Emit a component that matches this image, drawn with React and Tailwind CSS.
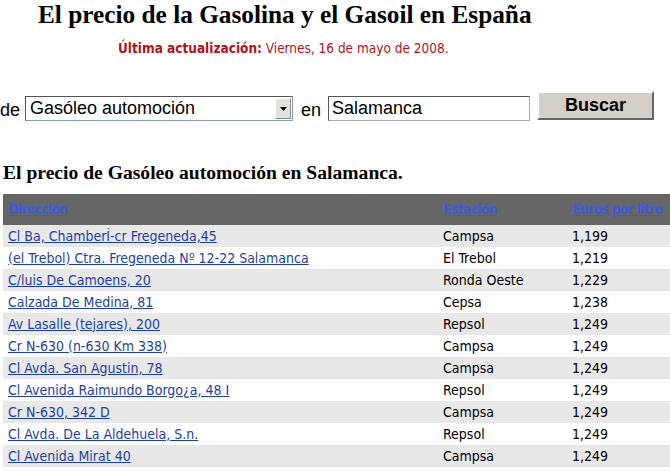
import React from 'react'

const rows = [
  ['Cl Ba, ChamberÍ-cr Fregeneda,45', 'Campsa', '1,199'],
  ['(el Trebol) Ctra. Fregeneda Nº 12-22 Salamanca', 'El Trebol', '1,219'],
  ['C/luis De Camoens, 20', 'Ronda Oeste', '1,229'],
  ['Calzada De Medina, 81', 'Cepsa', '1,238'],
  ['Av Lasalle (tejares), 200', 'Repsol', '1,249'],
  ['Cr N-630 (n-630 Km 338)', 'Campsa', '1,249'],
  ['Cl Avda. San Agustin, 78', 'Campsa', '1,249'],
  ['Cl Avenida Raimundo Borgo¿a, 48 I', 'Repsol', '1,249'],
  ['Cr N-630, 342 D', 'Campsa', '1,249'],
  ['Cl Avda. De La Aldehuela, S.n.', 'Repsol', '1,249'],
  ['Cl Avenida Mirat 40', 'Campsa', '1,249'],
]

const serif = { fontFamily: '"Liberation Serif", serif' }

const App = () => {
  return (
    <div className="w-[670px] h-[474px] overflow-hidden bg-white text-black">
      <h1
        className="pl-[38px] text-[25.3px] leading-[28px] font-bold whitespace-nowrap"
        style={serif}
      >
        El precio de la Gasolina y el Gasoil en España
      </h1>
      <p
        className="pl-[118px] mt-[12px] text-[13.5px] leading-[16px] text-[#b3101c] font-['DejaVu_Sans_Condensed',sans-serif]"
      >
        <b>Última actualización:</b> Viernes, 16 de mayo de 2008.
      </p>

      <div className="flex items-start mt-[35px] h-[30px] font-['Liberation_Sans',sans-serif] text-[18px] leading-[21px] whitespace-nowrap">
        <span className="mt-[9px]">de</span>
        <div className="ml-[5px] mt-[5px] w-[268px] h-[25px] border border-[#7f9db9] border-t-[#555] border-l-[#555] flex items-center bg-white">
          <span className="flex-1 pl-[4px]">Gasóleo automoción</span>
          <span className="w-[16px] h-[21px] mr-[1px] bg-[#e4e2dc] border border-[#888] border-t-white border-l-white flex items-center justify-center">
            <svg width="7" height="4" viewBox="0 0 7 4"><path d="M0 0h7L3.5 4z" fill="#000" /></svg>
          </span>
        </div>
        <span className="ml-[8px] mt-[9px]">en</span>
        <div className="ml-[7px] mt-[5px] w-[202px] h-[25px] border border-[#aaa] border-t-[#555] border-l-[#555] bg-white pl-[3px] leading-[23px]">
          Salamanca
        </div>
        <button className="ml-[7px] w-[117px] h-[29px] bg-[#d4d0c8] border-2 border-white border-r-[#666] border-b-[#666] font-bold">
          Buscar
        </button>
      </div>

      <h2 className="pl-[3px] mt-[41px] text-[19.6px] leading-[22px] font-bold whitespace-nowrap" style={serif}>
        El precio de Gasóleo automoción en Salamanca.
      </h2>

      <div className="ml-[3px] mt-[10px] w-[700px] font-['DejaVu_Sans_Condensed',sans-serif] text-[14px] whitespace-nowrap">
        <div className="flex items-center h-[31px] bg-[#666666] font-bold text-[14px] tracking-[-0.8px] text-[#3b5cd6] underline">
          <span className="w-[435px] pl-[5px]">Dirección</span>
          <span className="w-[129px] pl-[5px]">Estación</span>
          <span className="pl-[5px]">Euros por litro</span>
        </div>
        {rows.map((r, i) => (
          <div key={i} className={`flex items-center h-[22px] ${i % 2 === 0 ? 'bg-[#e8e8e8]' : 'bg-white'}`}>
            <span className="w-[435px] pl-[5px] text-[#1e3ea8] underline">{r[0]}</span>
            <span className="w-[129px] pl-[5px]">{r[1]}</span>
            <span className="pl-[5px]">{r[2]}</span>
          </div>
        ))}
      </div>
    </div>
  )
}

export default App
